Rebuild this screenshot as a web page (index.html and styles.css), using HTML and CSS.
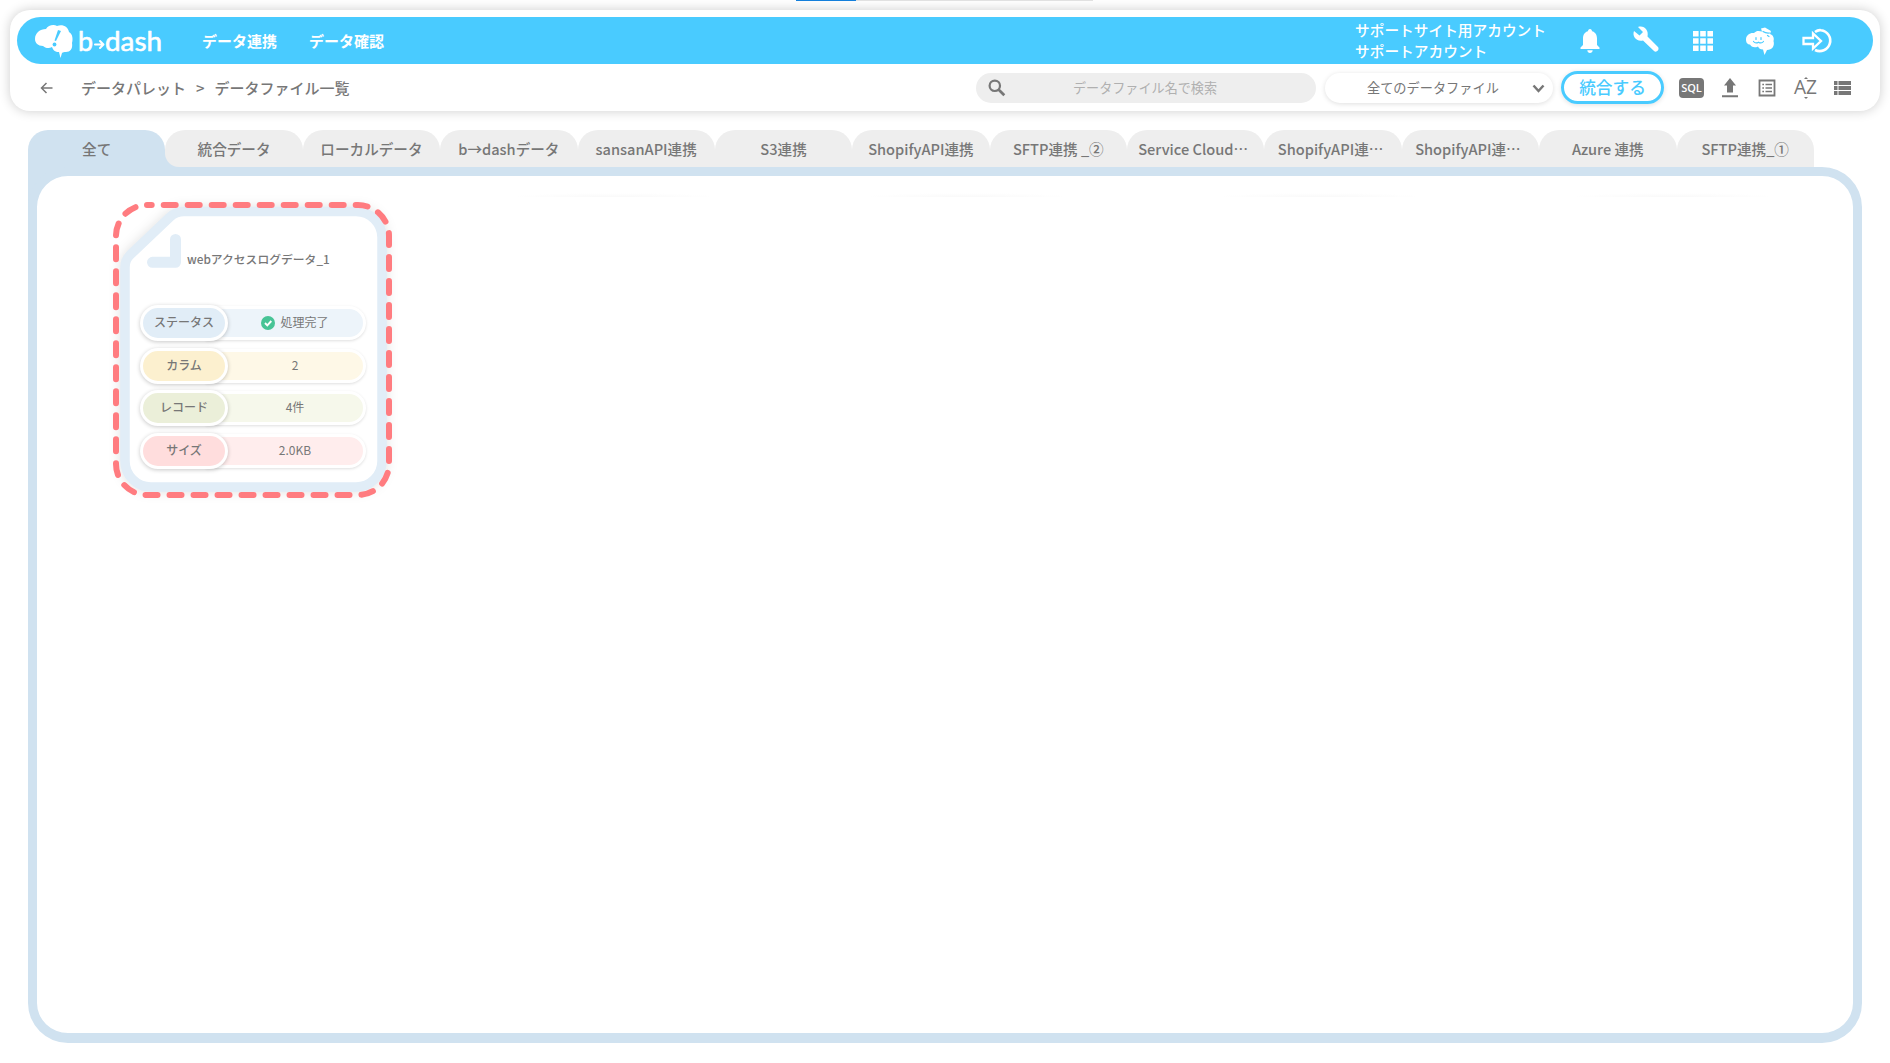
FILE: index.html
```html
<!DOCTYPE html>
<html lang="ja">
<head>
  <meta charset="utf-8">
  <title>データファイル一覧</title>
  <meta name="viewport" content="width=device-width, initial-scale=1.0">
  <link rel="stylesheet" href="styles.css">
</head>
<body>
  <div class="progress"><div class="progress-bar"></div></div>

  <header class="header">
    <div class="navbar">
      <svg class="logo" width="130" height="38" viewBox="0 0 130 38">
        <path fill="#fff" d="M1 17C1 11 6 7 12 7C14 3 20 2 23 4C29 2 34 5 35 10C39 12 39 18 38 21C39 27 36 30 32 30C30 30 29 30 28 31L26.5 36L25 30C21 30 19 28 18 25C15 27 11 26 9 24C4 24 1 21 1 17Z"/>
        <path fill="#49cbff" d="M24 8L27 9L22 19L20.5 18.5Z"/>
        <circle cx="20.5" cy="22.5" r="1.9" fill="#49cbff"/>
        <text class="logo-text" x="44" y="28.500" textLength="15" lengthAdjust="spacingAndGlyphs">b</text>
        <path d="M61 22.500H69M66 19L69.500 22.500L66 26" fill="none" stroke="#fff" stroke-width="2" stroke-linecap="round" stroke-linejoin="round"/>
        <text class="logo-text" x="71" y="28.500" textLength="57" lengthAdjust="spacingAndGlyphs">dash</text>
      </svg>
      <nav class="nav">
        <a>データ連携</a>
        <a>データ確認</a>
      </nav>
      <div class="account">
        <div>サポートサイト用アカウント</div>
        <div>サポートアカウント</div>
      </div>
      <div class="nav-icons">
        <svg width="20" height="26" viewBox="0 0 20 26">
          <path fill="#fff" d="M10 1C11.3 1 12 2 12 3.3C15.3 4 17 7 17 10.500V17L19.500 19.500V21H.5V19.500L3 17V10.500C3 7 4.700 4 8 3.300C8 2 8.700 1 10 1ZM7.300 22.300H12.700C12.500 24 11.500 25 10 25S7.500 24 7.300 22.300Z"/>
        </svg>
        <svg class="wrench" width="28" height="28" viewBox="0 0 28 28">
          <path fill="#fff" d="M6 2L11 7L7.500 10.500L2 6C0 11 4 17 11 15.500L22 26C24 28 28 25 26 22L15.500 11.500C17 5 12 0 6 2Z"/>
        </svg>
        <svg class="apps" width="20" height="20" viewBox="0 0 20 20">
          <path fill="#fff" d="M0 0h5.600v5.600H0zM7.200 0h5.600v5.600H7.200zM14.400 0H20v5.600h-5.600zM0 7.200h5.600v5.600H0zM7.200 7.200h5.600v5.600H7.200zM14.400 7.200H20v5.600h-5.600zM0 14.400h5.600V20H0zM7.200 14.400h5.600V20H7.200zM14.400 14.400H20V20h-5.600z"/>
        </svg>
        <svg width="30" height="30" viewBox="0 0 30 30">
          <path fill="#fff" d="M1 13.500C1 9 5 6.500 9 7C11 4.500 14 4.500 17 5.500L16 2.500L20 1.500L26 5L25 8C28 9 29.500 12 28.500 15C30 20 27 24 22 24L19.500 29L18 23.500C15 23.500 14 22.500 13 20.500C9 22.500 6 20.500 5 18.500C2 18.500 1 16 1 13.500Z"/>
          <path fill="none" stroke="#49cbff" stroke-width="1.200" stroke-linecap="round" d="M11 11.500V13.500M16 11.500V13.500M8.500 15.500Q10.500 18 13.500 16.200Q16.500 18 18.500 15.500M18 5.500Q21 7.500 24.500 7M22.500 9.500l1.500 1"/>
        </svg>
        <svg class="logout" width="30" height="26" viewBox="0 0 30 26">
          <path d="M13 4Q16 1.700 19 2.200A10.500 10.500 0 1 1 13 22" fill="none" stroke="#fff" stroke-width="2.600"/>
          <path d="M1.500 10H11V5.500L19 13L11 20.500V16H1.500Z" fill="#49cbff" stroke="#fff" stroke-width="2.300"/>
        </svg>
      </div>
    </div>

    <div class="toolbar">
      <svg class="back" width="14" height="12" viewBox="0 0 14 12">
        <path d="M12.500 6H2M6.500 1L1.500 6L6.500 11" fill="none" stroke="#777" stroke-width="1.500"/>
      </svg>
      <div class="breadcrumb">
        <span>データパレット</span><span class="sep">&gt;</span><span>データファイル一覧</span>
      </div>
      <div class="search">
        <svg width="18" height="18" viewBox="0 0 18 18">
          <circle cx="6.800" cy="6.800" r="5.200" fill="none" stroke="#777" stroke-width="2.200"/>
          <path d="M10.500 10.500L16.300 16.300" stroke="#777" stroke-width="2.700"/>
        </svg>
        <span>データファイル名で検索</span>
      </div>
      <div class="select">
        <span>全てのデータファイル</span>
        <svg width="13" height="9" viewBox="0 0 13 9">
          <path d="M1.500 1.500L6.500 7L11.500 1.500" fill="none" stroke="#777" stroke-width="2.500"/>
        </svg>
      </div>
      <div class="merge-btn">統合する</div>
      <div class="tools">
        <span class="sql">SQL</span>
        <svg class="upload" width="16" height="20" viewBox="0 0 16 20">
          <path fill="#777" d="M8 0L14 7.500H11V14.500H5V7.500H2ZM0 17.300H16V19.300H0Z"/>
        </svg>
        <svg width="18" height="18" viewBox="0 0 18 18">
          <path d="M1.500 1.500H16.500V16.500H1.500Z" fill="none" stroke="#777" stroke-width="1.800"/>
          <path d="M4.300 5.500H6M4.300 9H6M4.300 12.500H6M7.500 5.500H14M7.500 9H14M7.500 12.500H14" stroke="#777" stroke-width="1.600"/>
        </svg>
        <svg class="sort" width="24" height="22" viewBox="0 0 24 22">
          <text class="az" x="0" y="17" textLength="23" lengthAdjust="spacingAndGlyphs">AZ</text>
          <path d="M10 2L12 0L14 2ZM10 20L12 22L14 20Z" fill="#777"/>
        </svg>
        <svg width="17" height="14" viewBox="0 0 17 14">
          <path fill="#777" d="M0 0h3.500v4H0zM4.500 0H17v4H4.500zM0 5h3.500v4H0zM4.500 5H17v4H4.500zM0 10h3.500v4H0zM4.500 10H17v4H4.500z"/>
        </svg>
      </div>
    </div>
  </header>

  <main class="main">
    <div class="tabs">
      <div class="tab active">全て</div>
      <div class="tab">統合データ</div>
      <div class="tab">ローカルデータ</div>
      <div class="tab">b→dashデータ</div>
      <div class="tab">sansanAPI連携</div>
      <div class="tab">S3連携</div>
      <div class="tab">ShopifyAPI連携</div>
      <div class="tab">SFTP連携 _②</div>
      <div class="tab clipped">Service Cloud⋯</div>
      <div class="tab clipped">ShopifyAPI連⋯</div>
      <div class="tab clipped">ShopifyAPI連⋯</div>
      <div class="tab">Azure 連携</div>
      <div class="tab">SFTP連携_①</div>
    </div>

    <div class="panel">
      <div class="card">
        <!-- sheet with the folded corner, and the dashed frame round it -->
        <svg class="card-bg" width="290" height="308" viewBox="108 198 290 308">
          <path class="sheet" d="M184 211.500H356A26 26 0 0 1 382 237.500V461A26 26 0 0 1 356 487H151A26 26 0 0 1 125 461V267Q125 260 130 255L170 217Q176 211.500 184 211.500Z"/>
          <path d="M152.500 262.300H175.500V239.500" fill="none" stroke="#e1edf7" stroke-width="11" stroke-linecap="round" stroke-linejoin="round"/>
          <rect class="frame" x="116" y="205" width="273" height="290" rx="31"/>
        </svg>
        <div class="card-title">webアクセスログデータ_1</div>
        <div class="rows">
          <div class="row status">
            <div class="label">ステータス</div>
            <div class="value">
              <svg width="14" height="14" viewBox="0 0 14 14">
                <circle cx="7" cy="7" r="7" fill="#47c496"/>
                <path d="M4 7L6.300 9.300L10.300 5" fill="none" stroke="#fff" stroke-width="1.900"/>
              </svg>
              <span>処理完了</span>
            </div>
          </div>
          <div class="row column"><div class="label">カラム</div><div class="value"><span>2</span></div></div>
          <div class="row record"><div class="label">レコード</div><div class="value"><span>4件</span></div></div>
          <div class="row size"><div class="label">サイズ</div><div class="value"><span>2.0KB</span></div></div>
        </div>
      </div>
    </div>
  </main>
</body>
</html>
```
FILE: styles.css
```css
* {
  box-sizing: border-box;
}

body {
  margin: 0;
  height: 1063px;
  overflow: hidden;
  background: #fff;
  color: #777;
  font-family: "Noto Sans CJK JP", sans-serif;
  display: flex;
  flex-direction: column;
}

svg {
  display: block;
  flex: none;
  overflow: visible;
}

.progress {
  width: 297px;
  height: 1px;
  margin-left: 796px;
  background: #e3e3e3;
  flex: none;
}

.progress-bar {
  width: 60px;
  height: 1px;
  background: #1580dd;
}

.header {
  height: 101px;
  margin: 9px 10px 0;
  padding: 7px;
  border-radius: 20px;
  background: #fff;
  box-shadow: 0 0 12px rgba(0, 0, 0, 0.2);
  flex: none;
}

.navbar {
  display: flex;
  align-items: center;
  height: 47px;
  padding-left: 17px;
  border-radius: 24px;
  background: #49cbff;
  color: #fff;
}

.logo-text {
  font-family: Lato, sans-serif;
  font-size: 27px;
  fill: #fff;
  stroke: #fff;
  stroke-width: 0.6;
  stroke-linejoin: round;
}

.nav {
  display: flex;
  gap: 32px;
  width: 1173px;
  padding: 0 0 1px 38px;
  font-size: 15px;
  font-weight: bold;
  flex: none;
}

.account {
  width: 243px;
  padding: 0 0 2px 18px;
  font-size: 14.7px;
  line-height: 21px;
  font-weight: 500;
  white-space: nowrap;
  flex: none;
}

.nav-icons {
  display: flex;
  align-items: center;
  gap: 32px;
}

.wrench {
  margin-bottom: 4px;
}

.apps {
  margin-left: 1px;
}

.logout {
  margin-left: -5px;
}

.toolbar {
  display: flex;
  align-items: center;
  height: 48px;
  padding-left: 23px;
  font-weight: 500;
}

.breadcrumb {
  width: 922px;
  padding: 0 0 2px 27px;
  font-size: 15px;
  white-space: nowrap;
  flex: none;
}

.breadcrumb .sep {
  margin: 0 10px;
}

.search {
  display: flex;
  align-items: center;
  width: 340px;
  height: 30px;
  padding-left: 12px;
  border-radius: 15px;
  background: #eee;
  color: #b0b0b0;
  font-size: 13.1px;
  font-weight: 400;
  flex: none;
}

.search span {
  margin-left: 67px;
}

.select {
  display: flex;
  align-items: center;
  justify-content: space-between;
  width: 228px;
  height: 30px;
  margin-left: 9px;
  padding: 0 8px 0 42px;
  border-radius: 15px;
  box-shadow: 0 1px 5px rgba(0, 0, 0, 0.13);
  font-size: 13.2px;
  font-weight: 400;
  flex: none;
}

.search span,
.select span {
  padding-bottom: 1px;
}

.merge-btn {
  width: 103px;
  height: 33px;
  margin: 0 0 2px 8px;
  border: 3px solid #49cbff;
  border-radius: 17px;
  box-shadow: 0 1px 5px rgba(0, 0, 0, 0.12);
  color: #49cbff;
  font-size: 16.7px;
  line-height: 26px;
  text-align: center;
  flex: none;
}

.tools {
  display: flex;
  align-items: center;
  margin-left: 15px;
  gap: 19px;
}

.sql {
  width: 25px;
  height: 20px;
  border-radius: 4px;
  background: #777;
  color: #fff;
  font: 600 11px/20px "Open Sans", sans-serif;
  text-align: center;
}

.upload {
  margin: 0 1px 0 -1px;
}

.sort {
  margin: 0 -3px 0 -1px;
}

.az {
  font: 20px "Open Sans", sans-serif;
  fill: #777;
}

.main {
  width: 1834px;
  margin: 19px 0 0 28px;
  background: linear-gradient(#d0e2f0, #d0e2f0) 0 37px / 45px 45px no-repeat;
}

/* the blue square sits behind the rounded corner next to the active tab */
.tabs {
  display: flex;
  width: 1786px;
  height: 37px;
  background: linear-gradient(#d0e2f0, #d0e2f0) 137px 23px / 16px 14px no-repeat;
}

.tab {
  width: calc(100% / 13);
  border-radius: 20px 20px 0 0;
  background: #eee;
  font-size: 14.6px;
  font-weight: 500;
  line-height: 38px;
  text-align: center;
  white-space: nowrap;
  flex: none;
}

.tab.active {
  background: #d0e2f0;
}

.active + .tab {
  border-bottom-left-radius: 14px;
}

.tab.clipped {
  padding-right: 5px;
}

.panel {
  position: relative;
  height: 876px;
  padding: 22px 0 0 71px;
  border: 9px solid #d0e2f0;
  border-bottom-width: 10px;
  border-radius: 40px;
  background: #fff;
}

/* faint shadows of the neighbouring cards above the scroll edge */
.panel::before {
  content: "";
  position: absolute;
  left: 474px;
  top: 17px;
  width: 1265px;
  height: 4px;
  background: radial-gradient(ellipse 103px 4px at 103px 4px, #f9f9f9, #fff) 0 0 / 353px 4px;
}

.card {
  position: relative;
  width: 290px;
  height: 308px;
  padding: 45px 0 0 32px;
}

.card-bg {
  position: absolute;
  left: 0;
  top: 0;
}

.sheet {
  fill: #fff;
  stroke: #e1edf7;
  stroke-width: 9.5;
  filter: drop-shadow(0 0 6px rgba(0, 0, 0, 0.12));
}

.frame {
  fill: none;
  stroke: #ff7c80;
  stroke-width: 6;
  stroke-linecap: round;
  stroke-dasharray: 12 12;
  stroke-dashoffset: 7.3;
}

.card-title,
.rows {
  position: relative;
}

.card-title {
  height: 62px;
  padding-left: 47px;
  font-size: 11.8px;
  font-weight: 500;
  line-height: 32px;
  white-space: nowrap;
}

.rows {
  display: flex;
  flex-direction: column;
  gap: 6.6px;
}

.row {
  display: flex;
  align-items: center;
  width: 226px;
  height: 36px;
  font-size: 12px;
}

.label {
  z-index: 1;
  width: 88px;
  height: 36px;
  border: 3px solid #fff;
  border-radius: 18px;
  box-shadow: 0 1px 4px rgba(0, 0, 0, 0.22);
  font-weight: 500;
  line-height: 28px;
  text-align: center;
  flex: none;
}

.value {
  display: flex;
  align-items: center;
  justify-content: center;
  gap: 5px;
  width: 160px;
  height: 34px;
  margin-left: -22px;
  padding: 0 2px 0 20px;
  border: 3px solid #fff;
  border-radius: 0 17px 17px 0;
  box-shadow: 0 1px 3px rgba(0, 0, 0, 0.13);
}

.value span {
  padding-bottom: 3px;
}

.status .label { background: #e1edf7; }
.status .value { background: #edf4fa; }
.column .label { background: #fcf0cf; }
.column .value { background: #fef8e7; }
.record .label { background: #ebefd9; }
.record .value { background: #f6f8eb; }
.size .label { background: #ffdddd; }
.size .value { background: #ffeded; }
```
